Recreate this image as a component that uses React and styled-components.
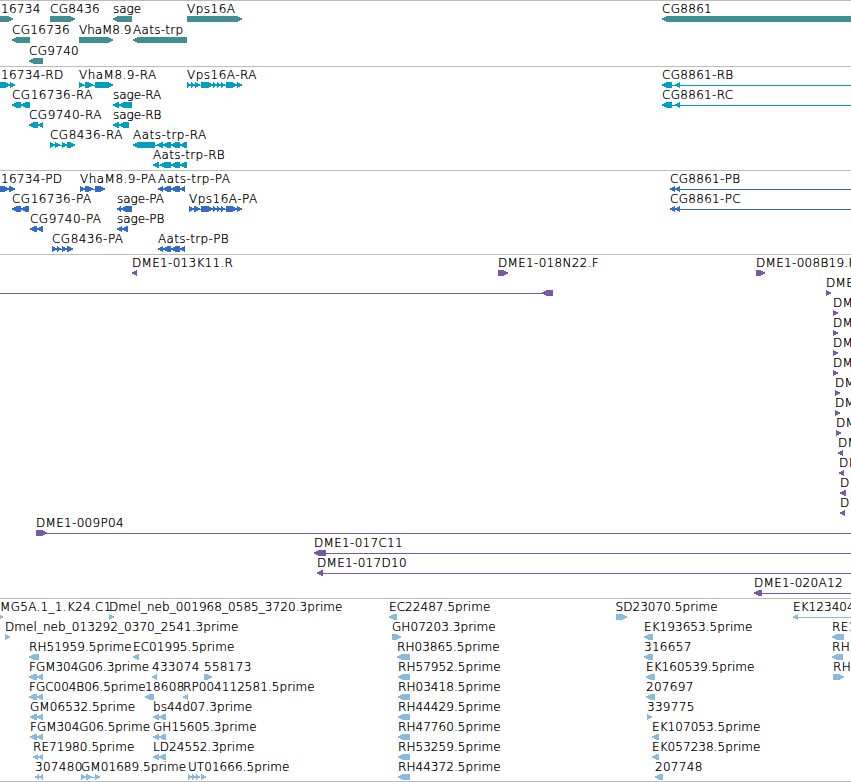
import styled, { createGlobalStyle } from "styled-components";

const GlobalStyle = createGlobalStyle`
  body {
    margin: 0;
    background: #fff;
  }
`;

const Browser = styled.main`
  width: 851px;
  height: 782px;
  overflow: hidden;
  font-family: "DejaVu Sans", sans-serif;
  font-size: 12px;
  font-weight: 200;
  color: #000;
`;

const Track = styled.section`
  border-top: 1px solid #bcbcbc;
  padding-bottom: ${(props) => props.$pad}px;
  color: ${(props) => props.$color};

  &:last-child {
    border-bottom: 1px solid #bcbcbc;
  }
`;

const Row = styled.div`
  display: grid;
  grid-template-columns: 851px;
  height: ${(props) => props.$height}px;
`;

/* every feature of a row shares one grid cell, the margin is its map position */
const FeatureBox = styled.div`
  grid-area: 1 / 1;
  margin-left: ${(props) => props.$start}px;
  min-width: 0;
`;

/* the zero-offset shadow thickens the light face a little */
const Label = styled.div`
  height: 15px;
  padding-left: ${(props) => props.$indent}px;
  line-height: 16px;
  white-space: nowrap;
  color: #000;
  text-shadow: 0 0 0 #000;
  letter-spacing: ${(props) => props.$spacing}px;
`;

const Glyph = styled.svg`
  display: block;
  overflow: visible;
  fill: currentColor;
`;

const END = 851;

function arrow(a, b, dir) {
  const tip = Math.min(5, b - a);
  if (dir === "R") {
    return `M${a} 0H${b - tip}L${b} 2.5V3.5L${b - tip} 6H${a}Z`;
  }
  return `M${b} 0H${a + tip}L${a} 2.5V3.5L${a + tip} 6H${b}Z`;
}

function spacing(label) {
  if (/^F.*prime$/.test(label)) return -0.02;
  if (/prime$/.test(label)) return 0.06;
  if (/^VhaM8.9$|^sage/.test(label)) return -0.05;
  if (/A$/.test(label)) return 0.48;
  return 0.3;
}

const VPS = [[201, 213], [213, 217], [217, 221], [221, 225], [226, 237], [237, 242]];
const AATS = [[158, 163], [163, 171], [171, 180], [180, 185]];

// a feature is [label, direction, exons, line from, line to]
const tracks = [
  {
    name: "genes",
    color: "#3f8e93",
    height: 21,
    pad: 2,
    rows: [
      [
        ["16734", "R", [[0, 13]]],
        ["CG8436", "R", [[50, 75]]],
        ["sage", "L", [[113, 132]]],
        ["Vps16A", "R", [[187, 242]]],
        ["CG8861", "L", [[662, END]]],
      ],
      [
        ["CG16736", "L", [[12, 30]]],
        ["VhaM8.9", "R", [[79, 113]]],
        ["Aats-trp", "L", [[133, 187]]],
      ],
      [["CG9740", "L", [[29, 43]]]],
    ],
  },
  {
    name: "transcripts",
    color: "#009fc0",
    height: 20,
    pad: 3,
    rows: [
      [
        ["16734-RD", "R", [[0, 10], [10, 15]]],
        ["VhaM8.9-RA", "R", [[79, 84], [85, 93], [95, 113]], 79, 113],
        ["Vps16A-RA", "R", [[187, 191], [191, 195], [195, 200], ...VPS], 187, 242],
        ["CG8861-RB", "L", [[662, 672], [675, 680]], 662, END],
      ],
      [
        ["CG16736-RA", "L", [[12, 21], [21, 30]]],
        ["sage-RA", "L", [[113, 119], [119, 132]]],
        ["CG8861-RC", "L", [[662, 672], [675, 680]], 662, END],
      ],
      [
        ["CG9740-RA", "L", [[29, 38], [38, 43]]],
        ["sage-RB", "L", [[113, 119], [119, 129]]],
      ],
      [
        ["CG8436-RA", "R", [[50, 55], [55, 60], [62, 67], [67, 75]], 50, 75],
        ["Aats-trp-RA", "L", [[133, 155], [157, 163], [163, 171], [171, 180], [180, 187]], 133, 187],
      ],
      [["Aats-trp-RB", "L", [[153, 159], [160, 171], [171, 180], [180, 187]], 153, 187]],
    ],
  },
  {
    name: "proteins",
    color: "#316ccc",
    height: 20,
    pad: 3,
    rows: [
      [
        ["16734-PD", "R", [[0, 9], [9, 15]]],
        ["VhaM8.9-PA", "R", [[80, 85], [85, 93], [95, 105]], 80, 105],
        ["Aats-trp-PA", "L", AATS],
        ["CG8861-PB", "L", [[670, 675], [675, 680]], 670, END],
      ],
      [
        ["CG16736-PA", "L", [[12, 21], [21, 29]]],
        ["sage-PA", "L", [[117, 121], [121, 132]]],
        ["Vps16A-PA", "R", [[189, 194], [194, 200], ...VPS], 189, 242],
        ["CG8861-PC", "L", [[670, 675], [675, 680]], 670, END],
      ],
      [
        ["CG9740-PA", "L", [[30, 37], [37, 43]]],
        ["sage-PB", "L", [[117, 122], [122, 128]]],
      ],
      [
        ["CG8436-PA", "R", [[52, 57], [57, 61], [62, 67], [67, 73]], 52, 73],
        ["Aats-trp-PB", "L", AATS],
      ],
    ],
  },
  {
    name: "clones",
    color: "#7759a6",
    height: 20,
    pad: 3,
    rows: [
      [
        ["DME1-013K11.R", "L", [[132, 137]]],
        ["DME1-018N22.F", "R", [[498, 508]]],
        ["DME1-008B19.F", "R", [[756, 765]]],
      ],
      [
        ["", "L", [[542, 553]], 0, 542],
        ["DME1", "R", [[826, 831]]],
      ],
      [["DME1", "R", [[833, 838]]]],
      [["DME1", "R", [[833, 838]]]],
      [["DME1", "R", [[833, 838]]]],
      [["DME1", "R", [[833, 838]]]],
      [["DME1", "R", [[835, 840]]]],
      [["DME1", "R", [[835, 840]]]],
      [["DME1", "R", [[836, 841]]]],
      [["DME1", "L", [[838, 843]]]],
      [["DME1", "L", [[839, 844]]]],
      [["DME1", "L", [[840, 846]]]],
      [["DME1", "L", [[840, 845]]]],
      [["DME1-009P04", "R", [[36, 47]], 36, END]],
      [["DME1-017C11", "L", [[314, 326]], 314, END]],
      [["DME1-017D10", "L", [[317, 323]], 317, END]],
      [["DME1-020A12", "L", [[754, 762]], 754, END]],
    ],
  },
  {
    name: "ests",
    color: "#8abbdd",
    height: 20,
    pad: 2,
    rows: [
      [
        ["MG5A.1_1.K24.C1", "R", [[-1, 3]]],
        ["Dmel_neb_001968_0585_3720.3prime", "R", [[109, 114]]],
        ["EC22487.5prime", "L", [[389, 397]]],
        ["SD23070.5prime", "R", [[615.5, 626]]],
        ["EK123404.5prime", "L", [[793, 798]], 793, END],
      ],
      [
        ["Dmel_neb_013292_0370_2541.3prime", "R", [[5, 10]]],
        ["GH07203.3prime", "R", [[392, 401]]],
        ["EK193653.5prime", "L", [[644, 653]]],
        ["RE1", "L", [[832, 844]]],
      ],
      [
        ["RH51959.5prime", "L", [[29, 39]]],
        ["EC01995.5prime", "L", [[133, 139]]],
        ["RH03865.5prime", "L", [[397, 410]]],
        ["316657", "L", [[644, 653]]],
        ["RH5", "L", [[832, 843]]],
      ],
      [
        ["FGM304G06.3prime", "L", [[29, 37], [37, 43]]],
        ["433074", "L", [[152, 157]]],
        ["558173", "R", [[204, 212]]],
        ["RH57952.5prime", "L", [[398, 410]]],
        ["EK160539.5prime", "L", [[646, 655]]],
        ["RH", "R", [[833, 844]]],
      ],
      [
        ["FGC004B06.5prime", "L", [[29, 37], [37, 43]]],
        ["18608", "L", [[145, 154]]],
        ["RP004112581.5prime", "L", [[183, 188]]],
        ["RH03418.5prime", "L", [[398, 410]]],
        ["207697", "L", [[646, 655]]],
      ],
      [
        ["GM06532.5prime", "L", [[30, 37], [37, 43]]],
        ["bs44d07.3prime", "L", [[153, 159], [159, 166]]],
        ["RH44429.5prime", "L", [[398, 410]]],
        ["339775", "R", [[647, 652]]],
      ],
      [
        ["FGM304G06.5prime", "L", [[30, 37], [37, 43]]],
        ["GH15605.3prime", "L", [[153, 159], [159, 166]]],
        ["RH47760.5prime", "L", [[398, 410]]],
        ["EK107053.5prime", "L", [[652, 659]]],
      ],
      [
        ["RE71980.5prime", "L", [[33, 38], [38, 43]]],
        ["LD24552.3prime", "L", [[153, 159], [159, 166]]],
        ["RH53259.5prime", "L", [[398, 410]]],
        ["EK057238.5prime", "L", [[652, 659]]],
      ],
      [
        ["307480", "L", [[35, 39], [39, 43]]],
        ["GM01689.5prime", "R", [[81, 86], [86, 92], [95, 100]], 81, 100],
        ["UT01666.5prime", "R", [[188, 192], [192, 196], [196, 200], [201, 206]]],
        ["RH44372.5prime", "L", [[398, 410]]],
        ["207748", "L", [[655, 663]]],
      ],
    ],
  },
];

function Feature({ feature }) {
  const [label, dir, exons, lineFrom, lineTo] = feature;
  const start = Math.min(exons[0][0], lineFrom ?? END);
  const end = Math.max(exons[exons.length - 1][1], lineTo ?? 0);

  return (
    <FeatureBox $start={start}>
      <Label $spacing={spacing(label)} $indent={start <= 0 ? 1 : 0}>
        {label}
      </Label>
      <Glyph
        width={end - start}
        height="6"
        viewBox={`${start} 0 ${end - start} 6`}
        shapeRendering="crispEdges"
      >
        {lineTo && <rect x={lineFrom} y="3" width={lineTo - lineFrom} height="1" />}
        {exons.map(([a, b]) => (
          <path key={a} d={arrow(a, b, dir)} />
        ))}
      </Glyph>
    </FeatureBox>
  );
}

function App() {
  return (
    <>
      <GlobalStyle />
      <Browser>
        {tracks.map((track) => (
          <Track key={track.name} $color={track.color} $pad={track.pad}>
            {track.rows.map((row, i) => (
              <Row key={i} $height={track.height}>
                {row.map((feature, j) => (
                  <Feature key={j} feature={feature} />
                ))}
              </Row>
            ))}
          </Track>
        ))}
      </Browser>
    </>
  );
}

export default App;
